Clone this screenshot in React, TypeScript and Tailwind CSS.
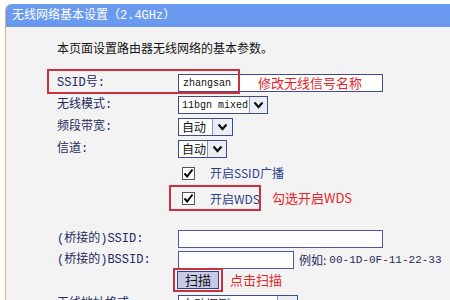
import React from "react";

const cjk = "font-['Noto_Sans_CJK_SC',sans-serif]";
const mono = "font-['Liberation_Mono','Noto_Sans_CJK_SC',monospace]";

function Chevron() {
  return (
    <svg width="11" height="8" viewBox="0 0 11 8">
      <path d="M1.5 1.5 L5.5 6 L9.5 1.5" fill="none" stroke="#111" strokeWidth="2.2" />
    </svg>
  );
}

function Select({ text, width, arrow, mono: isMono }: { text: string; width: number; arrow: number; mono?: boolean }) {
  return (
    <div className="flex h-[18px] border border-[#3d4c8e] bg-white" style={{ width }}>
      <div
        className={`flex-1 min-w-0 overflow-hidden whitespace-nowrap flex items-center pl-[3px] text-[#111] ${
          isMono ? "font-['Liberation_Mono',monospace] text-[10px]" : `text-[12px] ${cjk}`
        }`}
      >
        {text}
      </div>
      <div className="shrink-0 flex items-center justify-center border-l border-[#8d94b8] bg-[#eceef6]" style={{ width: arrow }}>
        <Chevron />
      </div>
    </div>
  );
}

function Check() {
  return (
    <div className="w-[13px] h-[13px] border border-[#555] bg-white flex items-center justify-center">
      <svg width="11" height="11" viewBox="0 0 11 11">
        <path d="M1.5 5.5 L4.2 8.5 L9.5 1.5" fill="none" stroke="#000" strokeWidth="2" />
      </svg>
    </div>
  );
}

function Label({ children, h = 22 }: { children: React.ReactNode; h?: number }) {
  return (
    <div className={`w-[121px] shrink-0 flex items-center whitespace-nowrap text-[12px] text-[#1f2b5e] ${mono}`} style={{ height: h }}>
      {children}
    </div>
  );
}

export default function App() {
  return (
    <div className="relative w-[450px] h-[300px] overflow-hidden bg-white">
      <div className="ml-[5px] mt-[4px] w-[470px] h-[320px] border-l border-[#d6b77e] bg-[#f3f3f3] rounded-tl-[6px]">
        <div className={`h-[23px] bg-[#6a9af0] rounded-tl-[6px] pl-[6px] flex items-center text-white text-[12px] ${mono}`}>
          无线网络基本设置（2.4GHz）
        </div>
        <div className="pl-[51px]">
          <div className={`mt-[10px] h-[22px] flex items-center text-[12px] text-[#151515] ${cjk}`}>
            本页面设置路由器无线网络的基本参数。
          </div>
          <div className="mt-[13px] flex flex-col">
            <div className="flex items-center h-[22px]">
              <Label>SSID号:</Label>
              <div className="relative w-[205px] h-[18px] border border-[#3d4c8e] bg-white flex items-center pl-[4px] font-['Liberation_Mono',monospace] text-[10px] text-[#111]">
                zhangsan
                <span className={`absolute left-[79px] top-[-2px] whitespace-nowrap text-[13px] leading-[20px] text-[#e3262b] ${cjk}`}>
                  修改无线信号名称
                </span>
              </div>
            </div>
            <div className="flex items-center h-[22px]">
              <Label>无线模式:</Label>
              <Select text="11bgn mixed" width={90} arrow={18} mono />
            </div>
            <div className="flex items-center h-[22px]">
              <Label>频段带宽:</Label>
              <Select text="自动" width={55} arrow={20} />
            </div>
            <div className="flex items-center h-[22px]">
              <Label>信道:</Label>
              <Select text="自动" width={49} arrow={19} />
            </div>
            <div className="flex items-center h-[26px]">
              <div className="w-[125px] shrink-0" />
              <Check />
              <span className={`ml-[15px] text-[12px] text-[#2c3f8e] ${cjk}`}>开启SSID广播</span>
            </div>
            <div className="flex items-center h-[25px]">
              <div className="w-[125px] shrink-0" />
              <Check />
              <span className={`ml-[15px] text-[12px] text-[#2c3f8e] ${cjk}`}>开启WDS</span>
            </div>
            <div className="h-[17px]" />
            <div className="flex items-center h-[21px]">
              <Label h={21}>(桥接的)SSID:</Label>
              <div className="w-[205px] h-[18px] border border-[#4b5a9c] bg-white" />
            </div>
            <div className="flex items-center h-[22px]">
              <Label>(桥接的)BSSID:</Label>
              <div className="w-[116px] h-[18px] border border-[#4b5a9c] bg-white" />
              <span className={`ml-[5px] text-[12px] text-[#1f2b5e] ${cjk}`}>例如:</span>
              <span className="ml-[3px] font-['Liberation_Mono',monospace] text-[11px] text-[#1f2b5e]">00-1D-0F-11-22-33</span>
            </div>
            <div className="flex items-center h-[18px]">
              <div className="w-[120px] shrink-0" />
              <div className={`w-[42px] h-[18px] border border-[#37407f] bg-[#c8cbe8] flex items-center justify-center text-[13px] text-[#111] ${cjk}`}>
                扫描
              </div>
              <span className={`ml-[11px] text-[13px] text-[#e3262b] ${cjk}`}>点击扫描</span>
            </div>
            <div className="flex items-start h-[24px] pt-[6px]">
              <Label h={18}>无线地址格式:</Label>
              <Select text="自动探测" width={120} arrow={20} />
            </div>
          </div>
        </div>
      </div>
      <div className="absolute left-[47px] top-[69px] w-[193px] h-[25px] border-2 border-[#c8313d]" />
      <div className="absolute left-[169px] top-[185px] w-[92px] h-[26px] border-2 border-[#c8313d]" />
      <span className={`absolute left-[272px] top-[188px] whitespace-nowrap text-[13px] leading-[20px] text-[#e3262b] ${cjk}`}>勾选开启WDS</span>
      <div className="absolute left-[173px] top-[268px] w-[50px] h-[24px] border-2 border-[#c8313d]" />
    </div>
  );
}
